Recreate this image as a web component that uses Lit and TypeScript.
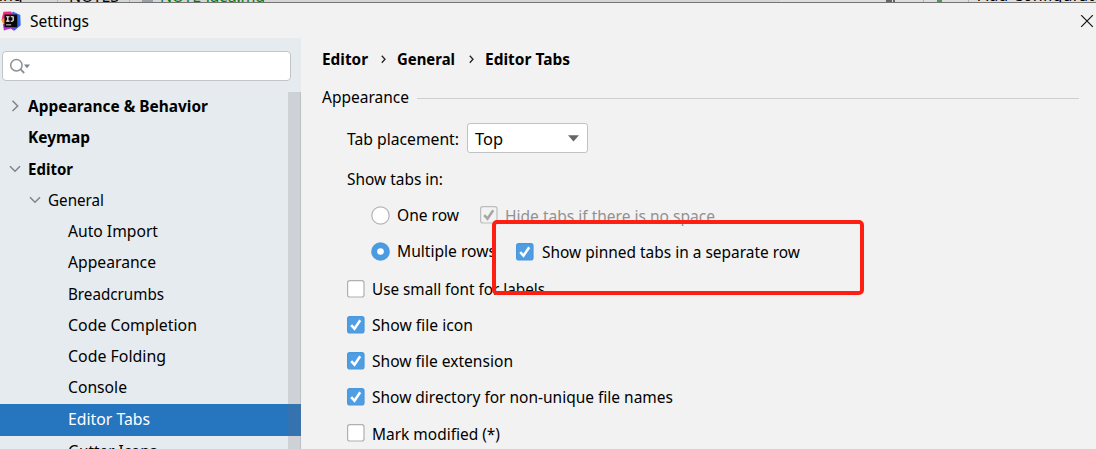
import { LitElement, html, css, svg, nothing } from "lit";
import { customElement, property } from "lit/decorators.js";

/** One line of text, laid out to a fixed measure. */
@customElement("fit-label")
class FitLabel extends LitElement {
  @property() text = "";
  @property({ type: Number }) w = 100;
  @property({ type: Boolean }) bold = false;
  static styles = css`
    :host { display: block; flex: none; }
    svg { display: block; overflow: visible; }
    text { font-family: "Noto Sans", "Open Sans", sans-serif; font-size: 15.6px; fill: currentColor; }
    .bold { font-weight: 700; font-size: 15.4px; }
  `;
  render() {
    return html`<svg width=${this.w} height="24">
      ${svg`<text x="0" y="18" class=${this.bold ? "bold" : ""} textLength=${this.w} lengthAdjust="spacingAndGlyphs">${this.text}</text>`}
    </svg>`;
  }
}

@customElement("check-box")
class CheckBox extends LitElement {
  @property({ type: Boolean }) checked = false;
  @property({ type: Boolean }) disabled = false;
  static styles = css`
    :host { display: block; flex: none; width: 18px; height: 18px; }
    svg { display: block; }
  `;
  render() {
    const on = this.checked && !this.disabled;
    const fill = on ? "#4f9ee3" : this.disabled ? "#f2f2f2" : "#fff";
    const line = on ? "#4a97da" : this.disabled ? "#bdbdbd" : "#b0b0b0";
    return html`<svg width="18" height="18" viewBox="0 0 18 18">
      <rect x=".6" y=".6" width="16.4" height="16.4" rx="2.2" fill=${fill} stroke=${line} stroke-width="1.2" />
      ${this.checked
        ? svg`<path d="M4.2 9.1 7.5 12.7 13.2 4.3" fill="none" stroke=${on ? "#fff" : "#a6a6a6"} stroke-width="2.5" />`
        : nothing}
    </svg>`;
  }
}

type Node = { t: string; w: number; level: number; h: number; arrow?: "open" | "closed"; selected?: boolean };

const TREE: Node[] = [
  { t: "Appearance & Behavior", w: 180, level: 0, h: 31, arrow: "closed" },
  { t: "Keymap", w: 62, level: 0, h: 32 },
  { t: "Editor", w: 45, level: 0, h: 31, arrow: "open" },
  { t: "General", w: 56, level: 1, h: 31, arrow: "open" },
  { t: "Auto Import", w: 90, level: 2, h: 31 },
  { t: "Appearance", w: 88, level: 2, h: 32 },
  { t: "Breadcrumbs", w: 96, level: 2, h: 31 },
  { t: "Code Completion", w: 129, level: 2, h: 31 },
  { t: "Code Folding", w: 98, level: 2, h: 31 },
  { t: "Console", w: 59, level: 2, h: 32 },
  { t: "Editor Tabs", w: 82, level: 2, h: 32, selected: true },
  { t: "Gutter Icons", w: 89, level: 2, h: 31 },
];

const OPTIONS = [
  { t: "Use small font for labels", w: 173, on: false, h: 36 },
  { t: "Show file icon", w: 101, on: true, h: 36 },
  { t: "Show file extension", w: 141, on: true, h: 36 },
  { t: "Show directory for non-unique file names", w: 301, on: true, h: 36 },
  { t: "Mark modified (*)", w: 128, on: false, h: 37 },
];

@customElement("app-root")
class AppRoot extends LitElement {
  static styles = css`
    * { box-sizing: border-box; }
    :host {
      display: flex; flex-direction: column; position: relative;
      width: 1096px; height: 449px; overflow: hidden;
      background: #f2f2f2; color: #000;
      font-family: "Noto Sans", "Open Sans", sans-serif;
    }
    svg { display: block; flex: none; }
    .behind { height: 3px; flex: none; border-bottom: 1px solid #747474; overflow: hidden; background: #d6d6d6; }
    .title { height: 35px; flex: none; display: flex; padding: 6px 2px 0 1px; }
    .title fit-label { margin: 0 auto 0 9px; }
    .logo { margin-top: 2px; }
    .close { margin-top: 6px; }
    .body { flex: 1; display: flex; min-height: 0; }
    .side { width: 301px; flex: none; background: #e6ebef; display: flex; flex-direction: column; min-height: 0; }
    .search {
      width: 289px; height: 30px; flex: none; margin: 13px 0 0 2px; background: #fff;
      border: 1px solid #c3c4c5; border-radius: 4px; padding: 6px 0 0 6px;
    }
    .scroller { display: grid; grid-template-columns: 301px; margin-top: 10px; flex: 1; min-height: 0; }
    .tree, .bar { grid-area: 1 / 1; }
    .bar { justify-self: end; width: 13px; margin-top: 1px; background: rgba(110, 110, 115, .2); border-right: 1px solid rgba(110, 110, 115, .18); z-index: 1; }
    .node { display: flex; padding-top: 3px; }
    .arrow { width: 28px; flex: none; padding: 4px 0 0 7px; }
    .l1 { padding-left: 20px; }
    .l2 { padding-left: 40px; }
    .selected { background: #2675bf; color: #fff; }
    .main { flex: 1; padding: 9px 0 0 21px; }
    .row { display: flex; align-items: center; }
    .crumbs { height: 24px; }
    .sep { margin: 0 11px 0 13px; }
    .crumbs .sep:nth-of-type(2) { margin-left: 14px; }
    .group { height: 24px; margin-top: 14px; }
    .rule { height: 1px; width: 662px; background: #cfcfcf; margin: 3px 0 0 8px; }
    .placement { height: 30px; margin: 14px 0 0 25px; gap: 8px; }
    .placement fit-label { margin-top: 2px; }
    .select {
      width: 121px; height: 30px; background: #fff; border: 1px solid #c2c2c2; border-radius: 3px;
      display: flex; align-items: center; justify-content: space-between; padding: 0 8px 0 7px;
    }
    .caption { height: 24px; margin: 14px 0 0 25px; }
    .choice { height: 36px; margin-left: 49px; }
    .first { margin-top: 6px; }
    .choice > svg { margin-right: 7px; }
    .hide { display: flex; align-items: center; color: #919191; gap: 7px; margin: 0 0 0 21px; }
    .hide fit-label { margin-top: 2px; }
    .pinned { display: flex; align-items: center; gap: 8px; margin: 2px 0 0 20px; }
    .options { margin: 2px 0 0 25px; }
    .option { gap: 7px; }
    .option check-box { margin-bottom: 1px; }
    .mark { position: absolute; left: 492px; top: 220px; width: 372px; height: 75px; border: 4px solid #ff1e12; border-radius: 5px; }
  `;

  private arrow(kind?: "open" | "closed") {
    if (!kind) return nothing;
    return html`<svg width="16" height="16" viewBox="0 0 16 16">
      <path d=${kind === "open" ? "M3 5.2 8 10.2 13 5.2" : "M5.5 2.8 10.7 8 5.5 13"} fill="none" stroke="#808488" stroke-width="1.5" />
    </svg>`;
  }

  private sep() {
    return html`<svg class="sep" width="5" height="9" viewBox="0 0 5 9"><path d="M.8 .8 4 4.3 .8 7.8" fill="none" stroke="#222" stroke-width="1.3" /></svg>`;
  }

  render() {
    return html`
      <div class="behind">
        <svg width="1096" height="2">
          <rect x="780" width="316" height="2" fill="#dedede" />
          <g font-size="16"><text x="-11" y="1">ding</text><text x="69" y="2" textLength="50">NOTES</text>
          <text x="160" y="2" fill="#087a08" textLength="105">NOTE-idea.md</text><text x="978" y="1" textLength="116">Add Configurat</text></g>
          <path d="M57.5 0v2M129.5 0v2M923.5 0v2M968.5 0v2" stroke="#b4b4b4" />
          <rect x="142" width="11" height="2" fill="#9aa1a6" />
          <rect x="886" width="6" height="2" fill="#666" /><rect x="893" width="2" height="2" fill="#666" /><rect x="937" width="5" height="2" fill="#499c54" />
        </svg>
      </div>
      <div class="title">
        <svg class="logo" width="20" height="20" viewBox="-.5 1.5 19.5 19.8">
          <defs>
            <linearGradient id="b" x1="0" y1="1" x2="1" y2="0"><stop offset="0" stop-color="#8a3df0" /><stop offset=".5" stop-color="#2f62ee" /><stop offset="1" stop-color="#3b78ef" /></linearGradient>
            <linearGradient id="r" x1="0" y1="0" x2="1" y2="1"><stop offset="0" stop-color="#fb2d62" /><stop offset="1" stop-color="#c12bbd" /></linearGradient>
          </defs>
          <path d="M11 2 18.5 5.5 18.8 15.5 12.5 21 5 16z" fill="url(#b)" />
          <path d="M1.8 2.2 9 2 13 6 8 16 .2 9z" fill="url(#r)" />
          <path d="M-.5 10 4 8 5 15 1.2 13.5z" fill="#fb8b24" />
          <path d="M1.2 14 8 14 12.5 21 9 18.8 2.2 20.8z" fill="#b331d6" />
          <rect x="2.8" y="5" width="12.6" height="12.5" fill="#080808" />
          <path d="M4.4 7.2h3.4M6.1 7.2v4.4M4.4 11.6h3.4M9 7.2h2.8M11.4 7.2v3.4q0 1.2-2.4 1" fill="none" stroke="#fff" stroke-width="1.2" />
          <path d="M4.4 15.2h5" stroke="#ddd" stroke-width="1" />
        </svg>
        <fit-label text="Settings" w="59"></fit-label>
        <svg class="close" width="14" height="14" viewBox="0 0 14 14"><path d="M1.2 .2 12.8 11.8M12.8 .2 1.2 11.8" stroke="#111" stroke-width="1.2" /></svg>
      </div>
      <div class="body">
        <div class="side">
          <div class="search">
            <svg width="24" height="18" viewBox="0 0 24 18">
              <circle cx="7.4" cy="7.2" r="5.7" fill="none" stroke="#8a9197" stroke-width="1.5" />
              <path d="M11.4 11.2 15.2 15" stroke="#8a9197" stroke-width="1.8" /><path d="M15 6.6h6L18 10.2z" fill="#7d8489" />
            </svg>
          </div>
          <div class="scroller">
            <div class="tree">
              ${TREE.map(
                (n) => html`<div class="node l${n.level} ${n.selected ? "selected" : ""}" style="height:${n.h}px">
                  <div class="arrow">${this.arrow(n.arrow)}</div>
                  <fit-label .text=${n.t} .w=${n.w} ?bold=${n.level === 0}></fit-label>
                </div>`
              )}
            </div>
            <div class="bar"></div>
          </div>
        </div>
        <div class="main">
          <div class="row crumbs">
            <fit-label text="Editor" w="46" bold></fit-label>${this.sep()}
            <fit-label text="General" w="58" bold></fit-label>${this.sep()}
            <fit-label text="Editor Tabs" w="85" bold></fit-label>
          </div>
          <div class="row group"><fit-label text="Appearance" w="87"></fit-label><div class="rule"></div></div>
          <div class="row placement">
            <fit-label text="Tab placement:" w="112"></fit-label>
            <div class="select">
              <fit-label text="Top" w="28"></fit-label>
              <svg width="11" height="7" viewBox="0 0 11 7"><path d="M0 .3h11L5.5 6.6z" fill="#666" /></svg>
            </div>
          </div>
          <div class="row caption"><fit-label text="Show tabs in:" w="96"></fit-label></div>
          <div class="row choice first">
            <svg width="19" height="19" viewBox="0 0 19 19"><circle cx="9.5" cy="9.5" r="8.7" fill="#fff" stroke="#b3b3b3" stroke-width="1.2" /></svg>
            <fit-label text="One row" w="62"></fit-label>
            <div class="hide"><check-box checked disabled></check-box><fit-label text="Hide tabs if there is no space" w="210"></fit-label></div>
          </div>
          <div class="row choice">
            <svg width="19" height="19" viewBox="0 0 19 19"><circle cx="9.5" cy="9.5" r="9.3" fill="#4c9be0" /><circle cx="9.5" cy="9.5" r="3.3" fill="#fff" /></svg>
            <fit-label text="Multiple rows" w="99"></fit-label>
            <div class="pinned"><check-box checked></check-box><fit-label text="Show pinned tabs in a separate row" w="258"></fit-label></div>
          </div>
          <div class="options">
            ${OPTIONS.map(
              (o) => html`<div class="row option" style="height:${o.h}px">
                <check-box ?checked=${o.on}></check-box><fit-label .text=${o.t} .w=${o.w}></fit-label>
              </div>`
            )}
          </div>
        </div>
      </div>
      <div class="mark"></div>
    `;
  }
}
